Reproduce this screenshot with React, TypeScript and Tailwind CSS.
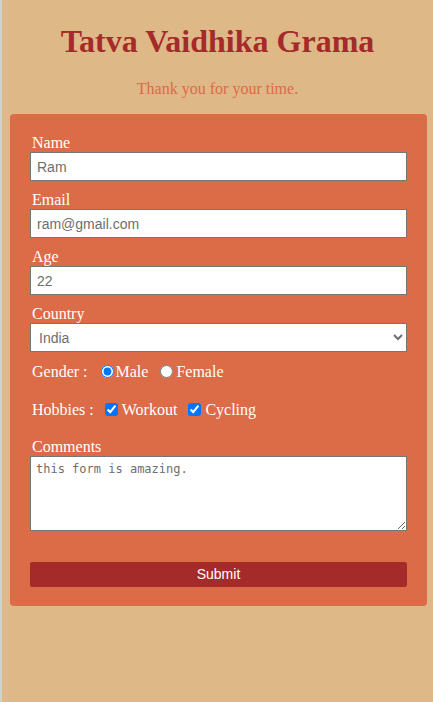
export default function App() {
  const label = "block h-[18px] pl-[2px] leading-[18px] text-[16px] text-white";
  const field =
    "block w-full h-[29px] bg-white border border-[#767676] px-[6px] text-[14px] text-[#6e6e6e] font-['Liberation_Sans',Arial,sans-serif] outline-none";

  return (
    <div className="flex min-h-[702px] bg-[#deb887] font-['Liberation_Serif','Times_New_Roman',serif]">
      <div className="w-[2px] shrink-0 bg-[#cfd0d6]" />
      <div className="flex-1">
        <h1 className="pt-[23px] text-center text-[32px] leading-[37px] font-bold text-[#a52a2a]">
          Tatva Vaidhika Grama
        </h1>
        <p className="mt-[20px] text-center text-[16px] leading-[18px] text-[#dc6b47]">
          Thank you for your time.
        </p>

        <form
          className="mt-[16px] ml-[8px] w-[417px] rounded-[4px] bg-[#dc6b47] px-[20px] pt-[20px] pb-[19px]"
          onSubmit={(e) => e.preventDefault()}
        >
          <label className={label}>Name</label>
          <input className={field} defaultValue="Ram" />

          <label className={`${label} mt-[10px]`}>Email</label>
          <input className={field} defaultValue="ram@gmail.com" />

          <label className={`${label} mt-[10px]`}>Age</label>
          <input className={field} defaultValue="22" />

          <label className={`${label} mt-[10px]`}>Country</label>
          <select className={`${field} pl-[4px]`} defaultValue="India">
            <option>India</option>
            <option>USA</option>
          </select>

          <div className="mt-[10px] flex h-[20px] items-center pl-[2px] text-[16px] text-white">
            <span>Gender :</span>
            <input type="radio" name="gender" defaultChecked className="ml-[13px] mr-[2px] mb-[2px] h-[13px] w-[13px]" />
            <span>Male</span>
            <input type="radio" name="gender" className="ml-[12px] mr-[3px] mb-[2px] h-[13px] w-[13px]" />
            <span>Female</span>
          </div>

          <div className="mt-[18px] flex h-[20px] items-center pl-[2px] text-[16px] text-white">
            <span>Hobbies :</span>
            <input type="checkbox" defaultChecked className="ml-[11px] mr-[4px] mb-[2px] h-[13px] w-[13px]" />
            <span>Workout</span>
            <input type="checkbox" defaultChecked className="ml-[11px] mr-[4px] mb-[2px] h-[13px] w-[13px]" />
            <span>Cycling</span>
          </div>

          <label className={`${label} mt-[18px]`}>Comments</label>
          <textarea
            className="block h-[75px] w-full border border-[#767676] bg-white px-[5px] py-[3px] font-['DejaVu_Sans_Mono','Liberation_Mono',monospace] text-[12px] text-[#6e6e6e] outline-none"
            defaultValue="this form is amazing."
          />

          <button
            type="submit"
            className="mt-[31px] block h-[25px] w-full rounded-[2px] bg-[#a52a2a] text-[14px] text-white font-['Liberation_Sans',Arial,sans-serif]"
          >
            Submit
          </button>
        </form>
      </div>
    </div>
  );
}
